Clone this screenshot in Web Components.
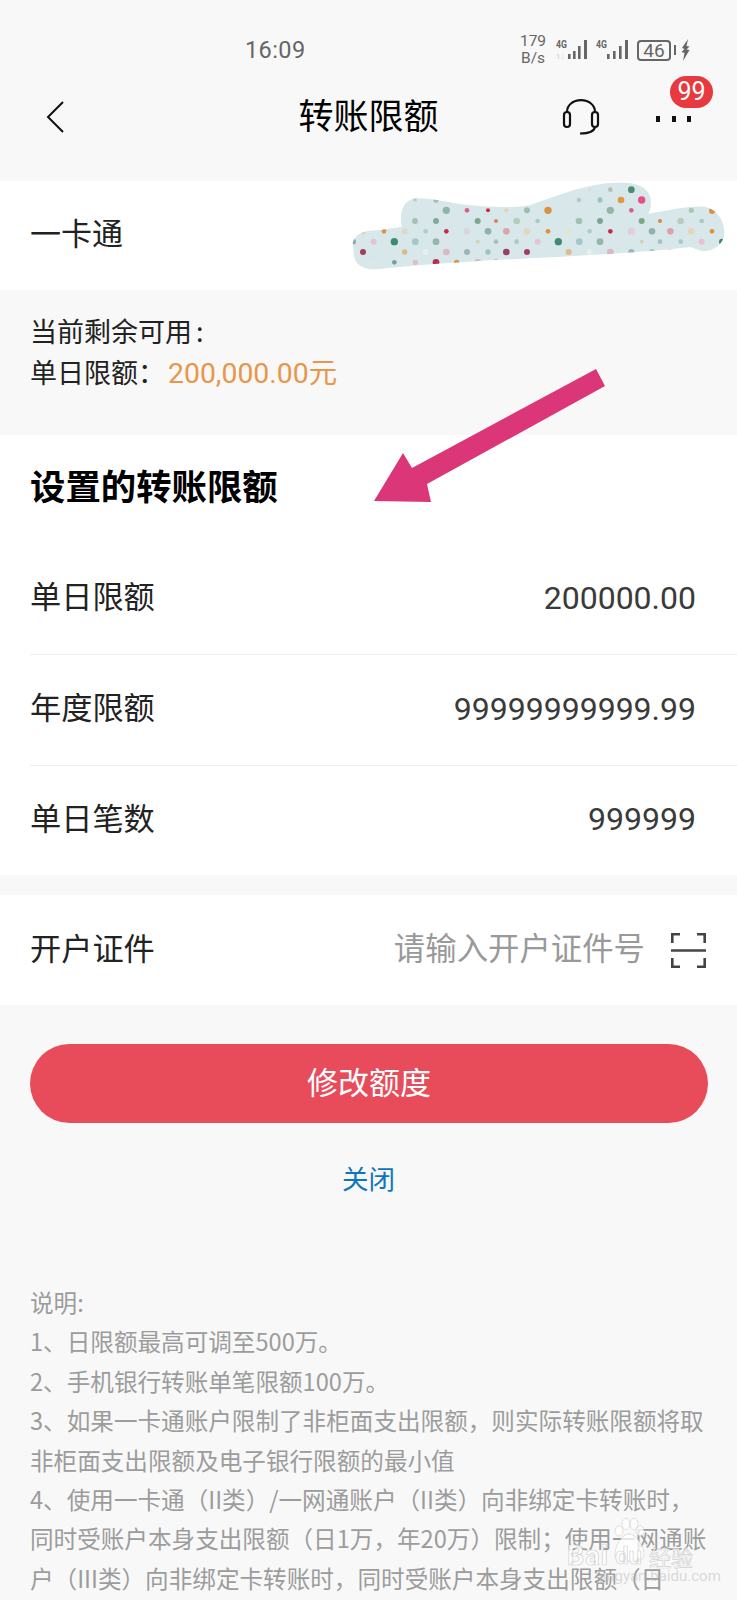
<!DOCTYPE html>
<html lang="zh">
<head>
<meta charset="utf-8">
<title>转账限额</title>
<style>
  html, body { margin: 0; padding: 0; background: #f8f8f8; }
  body { font-family: "Noto Sans CJK SC", Roboto, sans-serif; }
</style>
</head>
<body>
<app-screen>
  <status-bar></status-bar>
  <nav-bar title="转账限额" badge="99"></nav-bar>
  <info-row label="一卡通"><masked-blob></masked-blob></info-row>
  <quota-summary amount="200,000.00元"></quota-summary>
  <limit-list heading="设置的转账限额">
    <limit-row label="单日限额" value="200000.00"></limit-row>
    <limit-row label="年度限额" value="99999999999.99"></limit-row>
    <limit-row label="单日笔数" value="999999"></limit-row>
  </limit-list>
  <id-row label="开户证件" placeholder="请输入开户证件号"></id-row>
  <action-button>修改额度</action-button>
  <close-link>关闭</close-link>
  <notes-block>
    说明:<br>
    1、日限额最高可调至500万。<br>
    2、手机银行转账单笔限额100万。<br>
    3、如果一卡通账户限制了非柜面支出限额&#xFF0C;则实际转账限额将取<br>
    非柜面支出限额及电子银行限额的最小值<br>
    4、使用一卡通&#xFF08;II类&#xFF09;/一网通账户&#xFF08;II类&#xFF09;向非绑定卡转账时&#xFF0C;<br>
    同时受账户本身支出限额&#xFF08;日1万&#xFF0C;年20万&#xFF09;限制&#xFF1B;使用一网通账<br>
    户&#xFF08;III类&#xFF09;向非绑定卡转账时&#xFF0C;同时受账户本身支出限额&#xFF08;日
  </notes-block>
  <pointer-arrow></pointer-arrow>
  <baidu-mark></baidu-mark>
</app-screen>

<script>
const CJK = `"Noto Sans CJK SC", Roboto, sans-serif`;
const LATIN = `Roboto, "Noto Sans CJK SC", sans-serif`;

class AppScreen extends HTMLElement {
  constructor() {
    super();
    this.attachShadow({ mode: "open" });
    this.shadowRoot.innerHTML = `
      <style>
        :host { display: block; position: relative; width: 737px; height: 1600px; overflow: hidden; background: #f8f8f8; color: #111; font-family: ${CJK}; }
      </style>
      <slot></slot>`;
  }
}

class StatusBar extends HTMLElement {
  constructor() {
    super();
    this.attachShadow({ mode: "open" });
    this.shadowRoot.innerHTML = `
      <style>
        :host { display: flex; align-items: center; height: 60px; padding: 40px 47px 0 245px; box-sizing: border-box; color: #666; font-family: ${LATIN}; }
        .time { font-size: 23.5px; letter-spacing: 0.4px; }
        .right { margin-left: auto; display: flex; align-items: center; }
        .speed { font-size: 15.5px; line-height: 17px; text-align: center; width: 28px; margin-right: 9px; }
        .sig { width: 33px; height: 22px; margin-right: 7px; }
        .bat { width: 34px; height: 21px; box-sizing: border-box; border: 2px solid #666; border-radius: 4px; font-size: 19px; line-height: 17px; text-align: center; margin-left: 1px; }
        .tip { width: 2px; height: 10px; background: #666; margin: 0 0 0 3px; }
        svg.bolt { width: 9px; height: 22px; margin-left: 5px; }
      </style>
      <div class="time">16:09</div>
      <div class="right">
        <div class="speed">179<br>B/s</div>
        <svg class="sig" viewBox="0 0 33 22">
          <text x="0" y="9" font-family="Roboto" font-size="10" font-weight="700" fill="#666" textLength="11" lengthAdjust="spacingAndGlyphs">4G</text>
          <text x="0" y="20" font-family="Roboto" font-size="8" fill="#ccc">1↓</text>
          <g fill="#666"><rect x="12" y="15" width="2.6" height="5"/><rect x="17" y="12" width="2.6" height="8"/><rect x="22" y="7" width="2.6" height="13"/><rect x="28" y="1" width="3" height="19"/></g>
        </svg>
        <svg class="sig" viewBox="0 0 33 22">
          <text x="0" y="9" font-family="Roboto" font-size="10" font-weight="700" fill="#666" textLength="11" lengthAdjust="spacingAndGlyphs">4G</text>
          <g fill="#666"><rect x="11" y="15" width="2.6" height="5"/><rect x="17" y="12" width="2.6" height="8"/><rect x="23" y="7" width="2.6" height="13"/><rect x="29" y="1" width="3" height="19"/></g>
        </svg>
        <div class="bat">46</div><div class="tip"></div>
        <svg class="bolt" viewBox="0 0 9 22"><path d="M7 0 L1 9 L3.5 10 L0.5 13 L3.5 14 L2 22 L8.5 11 L5.5 10.5 L8.5 7.5 L5.5 7 Z" fill="#666"/></svg>
      </div>`;
  }
}

class NavBar extends HTMLElement {
  constructor() {
    super();
    this.attachShadow({ mode: "open" });
  }

  connectedCallback() {
    this.shadowRoot.innerHTML = `
      <style>
        :host { display: grid; grid-template-columns: 1fr auto 1fr; align-items: center; height: 121px; box-sizing: border-box; padding: 0 0 8px; }
        .back { padding-left: 46px; }
        .title { font-size: 35px; line-height: 44px; font-weight: 400; color: #000; margin-top: -5px; }
        .tools { display: flex; justify-content: flex-end; align-items: center; position: relative; padding-right: 46px; gap: 56px; }
        svg { display: block; }
        .badge { position: absolute; right: 24px; top: -23px; width: 43px; height: 32px; border-radius: 16px; background: #e8393e; color: #fff; font: 400 25px/32px ${LATIN}; text-align: center; }
      </style>
      <div class="back"><svg width="18" height="32" viewBox="0 0 18 32"><path d="M17 1 L2 16 L17 31" fill="none" stroke="#111" stroke-width="2"/></svg></div>
      <div class="title">${this.getAttribute("title")}</div>
      <div class="tools">
        <svg width="38" height="36" viewBox="0 0 38 36" fill="none" stroke="#111" stroke-width="2.2">
          <path d="M5 13 C5 6 11 1.2 19 1.2 C27 1.2 33 6 33 13"/>
          <rect x="2" y="13" width="6" height="15" rx="3"/>
          <rect x="30" y="13" width="6" height="15" rx="3"/>
          <path d="M33 28 C32 33 27 34.5 18 34.5"/>
        </svg>
        <svg width="35" height="6" viewBox="0 0 35 6" fill="#111" style="transform:translateY(2px)"><rect x="0" y="0" width="4" height="6"/><rect x="16" y="0" width="4" height="6"/><rect x="31" y="0" width="4" height="6"/></svg>
        <div class="badge">${this.getAttribute("badge")}</div>
      </div>`;
  }
}

class InfoRow extends HTMLElement {
  constructor() {
    super();
    this.attachShadow({ mode: "open" });
  }

  connectedCallback() {
    this.shadowRoot.innerHTML = `
      <style>
        :host { display: flex; justify-content: space-between; align-items: flex-start; height: 109px; background: #fff; }
        .label { font-size: 31px; line-height: 101px; padding-left: 30px; color: #222; }
      </style>
      <div class="label">${this.getAttribute("label")}</div>
      <slot></slot>`;
  }
}

// dots read off the reference: x, y, r, colour (in 3x units of the blob box)
const BLOB_DOTS = [
  [749,56,5,"#d5ddd6"],[811,56,7,"#b9bdb0"],[874,56,10,"#4f8a74"],
  [225,87,6,"#c2cfc9"],[288,87,8,"#9fbdb2"],[717,87,7,"#b4cdc8"],[780,87,8,"#a3c3b8"],[843,87,10,"#e09a45"],[905,87,11,"#e5507f"],
  [319,118,11,"#8fb5a4"],[381,118,7,"#d8618a"],[444,118,6,"#c8303f"],[499,118,6,"#dfd2b5"],[561,118,9,"#9dbfb0"],[624,118,11,"#d9933f"],[686,118,6,"#dfe6e2"],[811,118,11,"#92b7a8"],[874,118,7,"#d8618a"],[1054,118,8,"#a9c7b6"],[1116,120,9,"#dc9040"],
  [225,150,9,"#a6c2b4"],[288,150,9,"#80aa98"],[350,150,5,"#dde6e3"],[413,150,9,"#7fa58a"],[468,150,6,"#d68a4a"],[530,150,10,"#b7cdbb"],[593,150,7,"#a8c9c8"],[717,150,10,"#a0c2b0"],[780,150,9,"#79a594"],[905,150,9,"#7fa58a"],[960,150,6,"#d9883f"],[1022,150,10,"#b7cdbb"],[1085,150,7,"#a8c9c8"],
  [70,185,6,"#dfd0b8"],[132,181,7,"#d9934a"],[194,181,9,"#dfd9c5"],[257,181,7,"#b0cdca"],[319,181,7,"#c82c40"],[381,181,10,"#d9d5d8"],[444,181,10,"#8fb3ac"],[499,181,10,"#dba5a8"],[561,181,10,"#e5d5bb"],[624,181,7,"#dc9040"],[686,181,9,"#e2e4d2"],[749,181,7,"#b0cdca"],[811,181,7,"#c82c40"],[874,181,11,"#e0cfd8"],[936,181,10,"#8fb3ac"],[991,181,10,"#dba5a8"],[1054,181,10,"#e5d5bb"],[1116,181,7,"#dc9040"],
  [40,212,8,"#8fa9a8"],[101,212,9,"#e8c2d2"],[163,212,11,"#3f8a70"],[226,212,10,"#a3c7cc"],[288,212,10,"#94b8a8"],[413,212,6,"#d6d2b6"],[468,212,7,"#a7c2c2"],[530,212,7,"#a7c9cc"],[593,212,9,"#e8c2d2"],[655,212,11,"#3f8a70"],[718,212,10,"#a3c7cc"],[780,212,10,"#94b8a8"],[905,212,6,"#d6d2b6"],[960,212,7,"#a7c2c2"],[1022,212,7,"#a7c9cc"],[1085,212,9,"#e8c2d2"],[1146,212,9,"#3f8a70"],
  [69,243,9,"#a53c5a"],[194,243,8,"#e0b97f"],[257,243,9,"#e3f0f2"],[319,243,10,"#d9b8c4"],[381,243,9,"#98b8b0"],[444,243,8,"#9cc4c2"],[499,243,10,"#9c3c60"],[561,243,9,"#a53c66"],[686,243,9,"#e0b98f"],[749,243,9,"#e3f0f2"],[811,243,10,"#d9b8c4"],[874,243,9,"#98b8b0"],[936,243,9,"#9cc4c2"],[991,243,9,"#9c3c60"],
  [101,274,6,"#dfe8e4"],[163,274,7,"#6da59c"],[226,274,8,"#e0bcc4"],[288,274,10,"#b8304f"],[350,274,8,"#d9934a"],[413,274,10,"#d9b8c4"],[468,274,9,"#c89a6a"],[530,274,9,"#7fa59a"]
];

class MaskedBlob extends HTMLElement {
  constructor() {
    super();
    this.attachShadow({ mode: "open" });
    const dots = BLOB_DOTS.map(([x, y, r, c]) => `<circle cx="${x}" cy="${y}" r="${r}" fill="${c}"/>`).join("");
    this.shadowRoot.innerHTML = `
      <style>
        :host { display: block; width: 397px; height: 109px; }
        svg { display: block; }
      </style>
      <svg width="397" height="109" viewBox="0 30 1191 327">
        <defs><clipPath id="b"><path d="M38 215 C45 190 70 178 110 178 L185 168 C178 130 185 90 225 82 C270 78 340 100 420 105 C480 110 540 110 570 102 C640 80 720 45 800 37 C860 30 925 35 932 85 C935 105 930 120 925 128 C980 120 1040 105 1090 107 C1130 110 1155 150 1153 190 C1150 225 1110 245 1085 240 L1050 228 C980 238 800 250 650 258 C500 265 300 275 110 295 C70 297 45 280 42 255 Z"/></clipPath></defs>
        <g clip-path="url(#b)"><rect width="1191" height="360" fill="#d8e7e9"/>${dots}</g>
      </svg>`;
  }
}

class QuotaSummary extends HTMLElement {
  constructor() {
    super();
    this.attachShadow({ mode: "open" });
  }

  connectedCallback() {
    this.shadowRoot.innerHTML = `
      <style>
        :host { display: block; height: 145px; box-sizing: border-box; padding: 20px 30px 0; font-size: 27px; line-height: 41px; color: #222; }
        .colon { margin-left: 4px; }
        .amount { color: #e8964a; font-family: ${LATIN}; font-size: 28.4px; margin-left: 3px; }
      </style>
      <div>当前剩余可用<span class="colon">:</span></div>
      <div>单日限额&#xFF1A;<span class="amount">${this.getAttribute("amount")}</span></div>`;
  }
}

class LimitList extends HTMLElement {
  constructor() {
    super();
    this.attachShadow({ mode: "open" });
  }

  connectedCallback() {
    this.shadowRoot.innerHTML = `
      <style>
        :host { display: block; background: #fff; height: 440px; }
        h2 { margin: 0; height: 109px; padding-left: 30px; font-size: 35.4px; line-height: 100px; font-weight: 700; color: #000; }
      </style>
      <h2>${this.getAttribute("heading")}</h2>
      <slot></slot>`;
  }
}

class LimitRow extends HTMLElement {
  constructor() {
    super();
    this.attachShadow({ mode: "open" });
  }

  connectedCallback() {
    this.shadowRoot.innerHTML = `
      <style>
        :host { display: block; padding-left: 30px; }
        :host(:not(:last-child)) .in { border-bottom: 1px solid #eee; }
        :host(:last-child) .in { height: 109px; padding-bottom: 3px; }
        .in { display: flex; justify-content: space-between; align-items: center; height: 111px; box-sizing: border-box; padding: 0 41px 3px 0; }
        .label { font-size: 31.2px; color: #222; margin-bottom: 6px; }
        .value { font: 400 32px ${LATIN}; color: #3a3a3a; }
      </style>
      <div class="in">
        <div class="label">${this.getAttribute("label")}</div>
        <div class="value">${this.getAttribute("value")}</div>
      </div>`;
  }
}

class IdRow extends HTMLElement {
  constructor() {
    super();
    this.attachShadow({ mode: "open" });
  }

  connectedCallback() {
    this.shadowRoot.innerHTML = `
      <style>
        :host { display: flex; align-items: center; height: 110px; margin-top: 20px; padding: 0 31px 0 30px; background: #fff; }
        .label { font-size: 31.2px; color: #222; margin-bottom: 8px; }
        .ph { margin-left: auto; font-size: 31.4px; color: #999; margin-bottom: 8px; }
        svg { display: block; margin-left: 26px; }
      </style>
      <div class="label">${this.getAttribute("label")}</div>
      <div class="ph">${this.getAttribute("placeholder")}</div>
      <svg width="35" height="35" viewBox="0 0 35 35" fill="none" stroke="#444" stroke-width="2.6">
        <path d="M1.3 10 V1.3 H9"/><path d="M26 1.3 H33.7 V10"/><path d="M1.3 25 V33.7 H9"/><path d="M26 33.7 H33.7 V25"/><path d="M0 17.5 H35"/>
      </svg>`;
  }
}

class ActionButton extends HTMLElement {
  constructor() {
    super();
    this.attachShadow({ mode: "open" });
    this.shadowRoot.innerHTML = `
      <style>
        :host { display: block; margin: 39px 29px 0 30px; height: 79px; border-radius: 40px; background: #e84c5a; color: #fff; font-size: 31px; line-height: 74px; text-align: center; }
      </style>
      <slot></slot>`;
  }
}

class CloseLink extends HTMLElement {
  constructor() {
    super();
    this.attachShadow({ mode: "open" });
    this.shadowRoot.innerHTML = `
      <style>
        :host { display: block; margin-top: 34px; color: #0f76bd; font-size: 26.5px; line-height: 42px; text-align: center; }
      </style>
      <slot></slot>`;
  }
}

class NotesBlock extends HTMLElement {
  constructor() {
    super();
    this.attachShadow({ mode: "open" });
    this.shadowRoot.innerHTML = `
      <style>
        :host { display: block; margin-top: 84px; padding-left: 30px; color: #9c9c9c; font-size: 23.6px; line-height: 39.4px; white-space: nowrap; }
      </style>
      <slot></slot>`;
  }
}

class PointerArrow extends HTMLElement {
  constructor() {
    super();
    this.attachShadow({ mode: "open" });
    this.shadowRoot.innerHTML = `
      <style>
        :host { display: block; position: absolute; left: 370px; top: 365px; width: 240px; height: 140px; }
        svg { display: block; }
      </style>
      <svg width="240" height="140" viewBox="370 365 240 140"><path d="M596 369 L605 386 L427 484 L431 502 L374 501 L403 453 L412 468 Z" fill="#db3678"/></svg>`;
  }
}

class BaiduMark extends HTMLElement {
  constructor() {
    super();
    this.attachShadow({ mode: "open" });
    this.shadowRoot.innerHTML = `
      <style>
        :host { display: block; position: absolute; left: 565px; top: 1518px; width: 140px; height: 70px; }
        svg { position: absolute; left: 48px; top: 0; }
        .big { position: absolute; top: 24px; color: rgba(255,255,255,0.8); -webkit-text-stroke: 0.7px rgba(165,165,165,0.5); white-space: nowrap; }
        .bai { left: 2px; font: 700 27px/28px ${LATIN}; letter-spacing: 1px; }
        .du { left: 50px; font: 700 24px/28px ${LATIN}; }
        .jy { left: 84px; font: 400 22px/28px ${CJK}; }
        .small { position: absolute; left: 34px; top: 49px; color: rgba(190,190,190,0.55); font: 400 15px/18px ${LATIN}; white-space: nowrap; }
      </style>
      <svg width="32" height="48" viewBox="0 0 32 48" fill="rgba(255,255,255,.75)" stroke="rgba(165,165,165,.45)" stroke-width="0.7">
        <ellipse cx="6" cy="13" rx="4" ry="5"/><ellipse cx="13" cy="6" rx="4" ry="5.5"/><ellipse cx="21" cy="6" rx="4" ry="5.5"/><ellipse cx="27" cy="13" rx="4" ry="5"/>
        <path d="M16 16 C9 16 2 28 2 36 C2 44 10 44 16 43 C22 44 31 44 31 36 C31 28 23 16 16 16 Z"/>
      </svg>
      <div class="big bai">Bai</div>
      <div class="big du">du</div>
      <div class="big jy">经验</div>
      <div class="small">jingyan.baidu.com</div>`;
  }
}

customElements.define("app-screen", AppScreen);
customElements.define("status-bar", StatusBar);
customElements.define("nav-bar", NavBar);
customElements.define("info-row", InfoRow);
customElements.define("masked-blob", MaskedBlob);
customElements.define("quota-summary", QuotaSummary);
customElements.define("limit-list", LimitList);
customElements.define("limit-row", LimitRow);
customElements.define("id-row", IdRow);
customElements.define("action-button", ActionButton);
customElements.define("close-link", CloseLink);
customElements.define("notes-block", NotesBlock);
customElements.define("pointer-arrow", PointerArrow);
customElements.define("baidu-mark", BaiduMark);
</script>
</body>
</html>
